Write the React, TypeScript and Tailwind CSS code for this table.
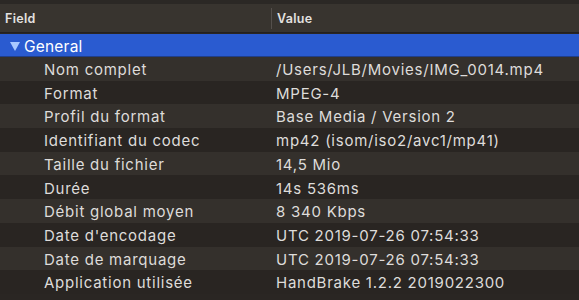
const rows: [string, string][] = [
  ["Nom complet", "/Users/JLB/Movies/IMG_0014.mp4"],
  ["Format", "MPEG-4"],
  ["Profil du format", "Base Media / Version 2"],
  ["Identifiant du codec", "mp42 (isom/iso2/avc1/mp41)"],
  ["Taille du fichier", "14,5 Mio"],
  ["Durée", "14s 536ms"],
  ["Débit global moyen", "8 340 Kbps"],
  ["Date d'encodage", "UTC 2019-07-26 07:54:33"],
  ["Date de marquage", "UTC 2019-07-26 07:54:33"],
  ["Application utilisée", "HandBrake 1.2.2 2019022300"],
];

export default function App() {
  return (
    <div
      className="w-[579px] h-[300px] overflow-hidden bg-[#2a2623] text-[#dedcda]"
      style={{ fontFamily: "Inter, 'Noto Sans', sans-serif" }}
    >
      {/* top strip */}
      <div className="h-[4px] bg-[#2b2825]" />

      {/* column header */}
      <div className="flex h-[29px] items-center bg-[#38342f] border-b border-[#232020] text-[12.5px] font-semibold tracking-[0.3px] text-[#e4e2e0]">
        <div className="w-[271px] pl-[5px] pt-[2px]">Field</div>
        <div className="h-[21px] w-px bg-[#55504c]" />
        <div className="pl-[5px] pt-[2px]">Value</div>
      </div>

      {/* group row */}
      <div className="mt-[1px] flex h-[23px] items-center bg-[#2a5bd0] border-b border-[#1f3e8a] text-[15.5px] tracking-[0.2px] text-white">
        <svg width="10" height="9" viewBox="0 0 10 9" className="ml-[10px] mr-[4px] mt-[2px]">
          <polygon points="0,0 10,0 5,9" fill="#a9c9ff" />
        </svg>
        <span className="pt-[3px]">General</span>
      </div>

      {/* rows */}
      {rows.map(([field, value], i) => (
        <div
          key={field}
          className={
            "flex h-[23.7px] items-center pt-[3px] text-[15px] tracking-[0.75px] " +
            (i % 2 === 0 ? "bg-[#34302c]" : "bg-[#292522]")
          }
        >
          <div className="w-[276px] shrink-0 pl-[44px] whitespace-nowrap">{field}</div>
          <div className="whitespace-nowrap">{value}</div>
        </div>
      ))}
    </div>
  );
}
